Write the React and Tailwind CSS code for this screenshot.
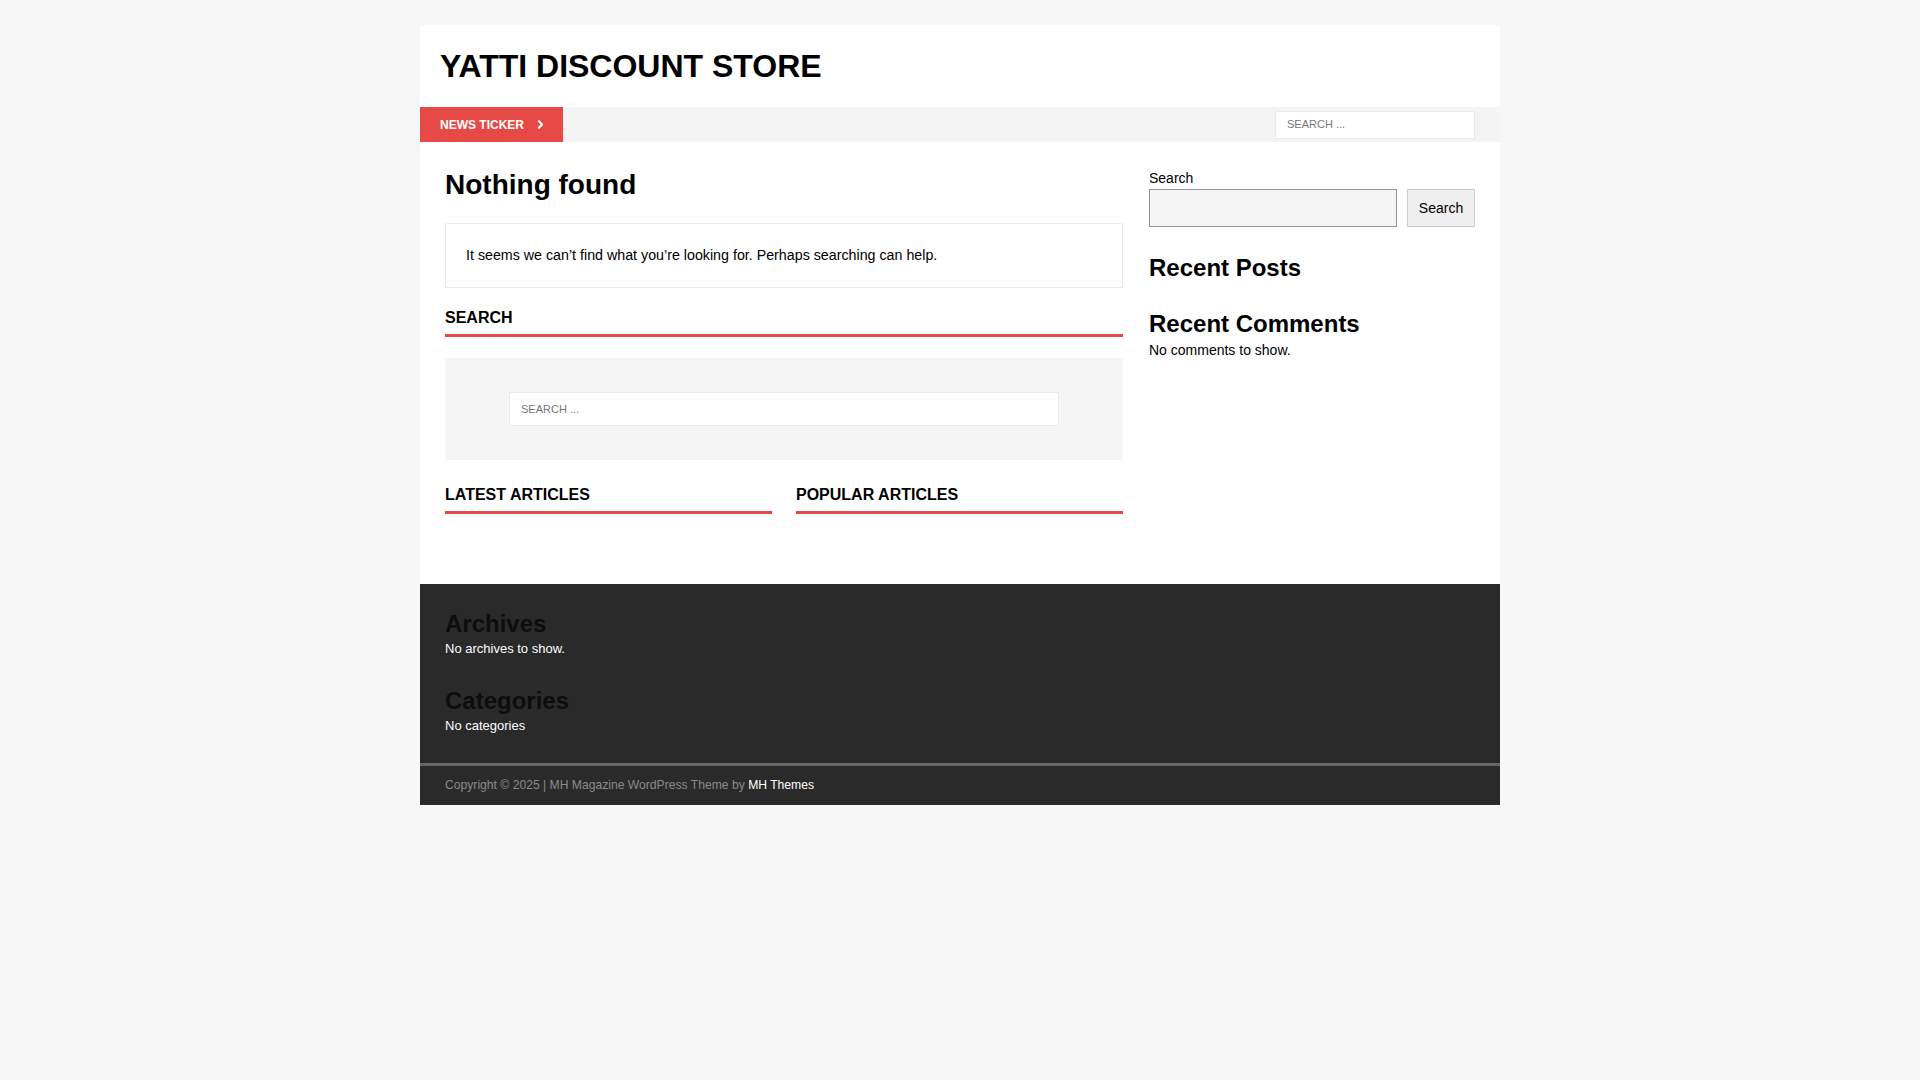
import { ChevronRight } from 'lucide-react';

const FONT = { fontFamily: '"Liberation Sans", Arial, Helvetica, sans-serif' };

function WidgetTitle({ children }) {
  return (
    <h4 className="text-[16px] leading-[20px] font-bold uppercase text-black pb-[6px] border-b-[3px] border-[#e64946]">
      {children}
    </h4>
  );
}

export default function App() {
  return (
    <div className="min-h-screen bg-[#f7f7f7] pt-[25px]" style={FONT}>
      <div className="w-[1080px] mx-auto">
        {/* Header */}
        <header className="bg-white h-[82px] flex items-center px-[20px]">
          <h1 className="text-[32px] leading-none font-bold text-black uppercase">Yatti Discount Store</h1>
        </header>

        {/* News ticker bar */}
        <div className="bg-[#f4f4f4] h-[35px] flex items-center justify-between">
          <div className="h-full w-[143px] bg-[#e64946] flex items-center pl-[20px] text-white text-[12px] font-bold uppercase">
            News Ticker
            <ChevronRight size={13} strokeWidth={4} className="ml-[10px]" />
          </div>
          <div className="mr-[25px] w-[200px] h-[28px] bg-white border border-[#ebebeb] flex items-center pl-[11px]">
            <span className="text-[11px] text-[#777] uppercase">Search ...</span>
          </div>
        </div>

        {/* Main wrapper */}
        <div className="bg-white h-[442px] p-[25px] flex gap-[26px]">
          <main className="w-[678px]">
            <h1 className="text-[28px] leading-[36px] font-bold text-black">Nothing found</h1>
            <div className="mt-[20px] border border-[#ebebeb] px-[20px] py-[20px] text-[14.25px] leading-[23px] text-black">
              It seems we can’t find what you’re looking for. Perhaps searching can help.
            </div>
            <div className="mt-[20px]">
              <WidgetTitle>Search</WidgetTitle>
            </div>
            <div className="mt-[21px] bg-[#f5f5f5] py-[34px] px-[64px]">
              <div className="h-[34px] bg-white border border-[#ebebeb] flex items-center pl-[11px]">
                <span className="text-[11px] text-[#777] uppercase">Search ...</span>
              </div>
            </div>
            <div className="mt-[25px] grid grid-cols-2 gap-[24px]">
              <WidgetTitle>Latest Articles</WidgetTitle>
              <WidgetTitle>Popular Articles</WidgetTitle>
            </div>
          </main>

          <aside className="w-[326px]">
            <div className="text-[14px] leading-[22px] text-black">Search</div>
            <div className="flex gap-[10px]">
              <div className="w-[248px] h-[38px] bg-[#f5f5f5] border border-[#949494]" />
              <button className="w-[68px] h-[38px] bg-[#efefef] border border-[#cccccc] text-[14px] text-black">
                Search
              </button>
            </div>
            <h2 className="mt-[26px] text-[24px] leading-[29px] font-bold text-black">Recent Posts</h2>
            <h2 className="mt-[27px] text-[24px] leading-[29px] font-bold text-black">Recent Comments</h2>
            <p className="mt-[2px] text-[14px] leading-[20px] text-black">No comments to show.</p>
          </aside>
        </div>

        {/* Footer widgets */}
        <footer className="bg-[#2a2a2a] pt-[25px] pb-[27px] px-[25px]">
          <h3 className="text-[24px] leading-[30px] font-bold text-[#0d0d0d]">Archives</h3>
          <p className="text-[13px] leading-[20px] text-white">No archives to show.</p>
          <h3 className="mt-[27px] text-[24px] leading-[30px] font-bold text-[#0d0d0d]">Categories</h3>
          <p className="text-[13px] leading-[20px] text-white">No categories</p>
        </footer>
        <div className="bg-[#2a2a2a] border-t-[3px] border-[#666] h-[42px] flex items-center px-[25px] text-[12.15px] text-[#8a8a8a]">
          Copyright © 2025 | MH Magazine WordPress Theme by&nbsp;<span className="text-white">MH Themes</span>
        </div>
      </div>
    </div>
  );
}
